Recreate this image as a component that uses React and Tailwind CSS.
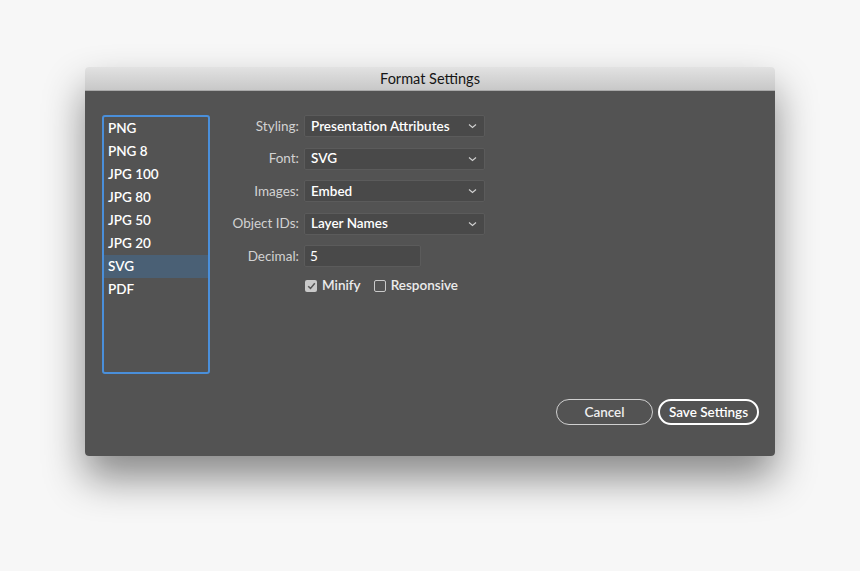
import React from "react";

const font = { fontFamily: "Lato, 'Open Sans', 'Liberation Sans', sans-serif" };

function Chevron() {
  return (
    <svg width="9" height="6" viewBox="0 0 9 6" className="shrink-0">
      <path d="M1 1.5 L4.5 4.5 L8 1.5" fill="none" stroke="#cfcfcf" strokeWidth="1.2" />
    </svg>
  );
}

function SelectRow({ label, value }) {
  return (
    <div className="flex items-center h-[22px]">
      <div className="w-[94px] text-right pr-[5px] text-[13.5px] text-[#d2d2d2]">{label}</div>
      <div className="w-[181px] h-[22px] flex items-center justify-between pl-[6px] pr-[7px] rounded-[2px] bg-[#494949] border border-[#5b5b5b] text-[13.5px] text-white font-semibold">
        <span>{value}</span>
        <Chevron />
      </div>
    </div>
  );
}

export default function App() {
  const items = ["PNG", "PNG 8", "JPG 100", "JPG 80", "JPG 50", "JPG 20", "SVG", "PDF"];
  return (
    <div className="w-[860px] h-[571px] bg-[#f7f7f7] pt-[67px] pl-[85px]" style={font}>
      <div className="w-[690px] h-[389px] rounded-[4px] overflow-hidden shadow-[0_22px_40px_rgba(0,0,0,0.45)] flex flex-col">
        <div className="h-[24px] bg-gradient-to-b from-[#e2e2e2] to-[#c8c8c8] border-b border-[#a9a9a9] flex items-center justify-center pt-[1px] text-[14.5px] text-[#151515]">
          Format Settings
        </div>
        <div className="flex-1 bg-[#535353] pt-[24px] pl-[17px] pr-[16px] flex flex-col">
          <div className="flex">
            <div className="w-[108px] h-[259px] border-2 border-[#4a8fda] rounded-[3px] flex flex-col pt-0">
              {items.map((it) => (
                <div
                  key={it}
                  className={
                    "h-[23px] flex items-center pl-[4px] text-[13.5px] font-semibold text-white " +
                    (it === "SVG" ? "bg-[#4a6075]" : "")
                  }
                >
                  {it}
                </div>
              ))}
            </div>
            <div className="flex flex-col gap-[10.5px]">
              <SelectRow label="Styling:" value="Presentation Attributes" />
              <SelectRow label="Font:" value="SVG" />
              <SelectRow label="Images:" value="Embed" />
              <SelectRow label="Object IDs:" value="Layer Names" />
              <div className="flex items-center h-[22px]">
                <div className="w-[94px] text-right pr-[5px] text-[13.5px] text-[#d2d2d2]">Decimal:</div>
                <div className="w-[117px] h-[22px] flex items-center pl-[5px] rounded-[2px] bg-[#494949] border border-[#5b5b5b] text-[13.5px] text-white">
                  5
                </div>
              </div>
              <div className="flex items-center h-[16px] pl-[95px]">
                <div className="w-[12px] h-[12px] rounded-[2px] bg-[#c9c9c9] flex items-center justify-center">
                  <svg width="9" height="8" viewBox="0 0 9 8">
                    <path d="M1.2 4.2 L3.5 6.4 L7.8 1.2" fill="none" stroke="#555" strokeWidth="1.5" />
                  </svg>
                </div>
                <span className="ml-[5px] text-[13.5px] font-semibold text-[#ececec]">Minify</span>
                <div className="ml-[13px] w-[12px] h-[12px] rounded-[2px] border border-[#c9c9c9]"></div>
                <span className="ml-[5px] text-[13.5px] font-semibold text-[#ececec]">Responsive</span>
              </div>
            </div>
          </div>
          <div className="flex justify-end gap-[5px] mt-[25px]">
            <div className="w-[97px] h-[26px] rounded-full border border-[#d0d0d0] flex items-center justify-center text-[13.5px] font-semibold text-[#efefef]">
              Cancel
            </div>
            <div className="w-[101px] h-[26px] rounded-full border-2 border-white flex items-center justify-center text-[13.5px] font-semibold text-white">
              Save Settings
            </div>
          </div>
        </div>
      </div>
    </div>
  );
}
